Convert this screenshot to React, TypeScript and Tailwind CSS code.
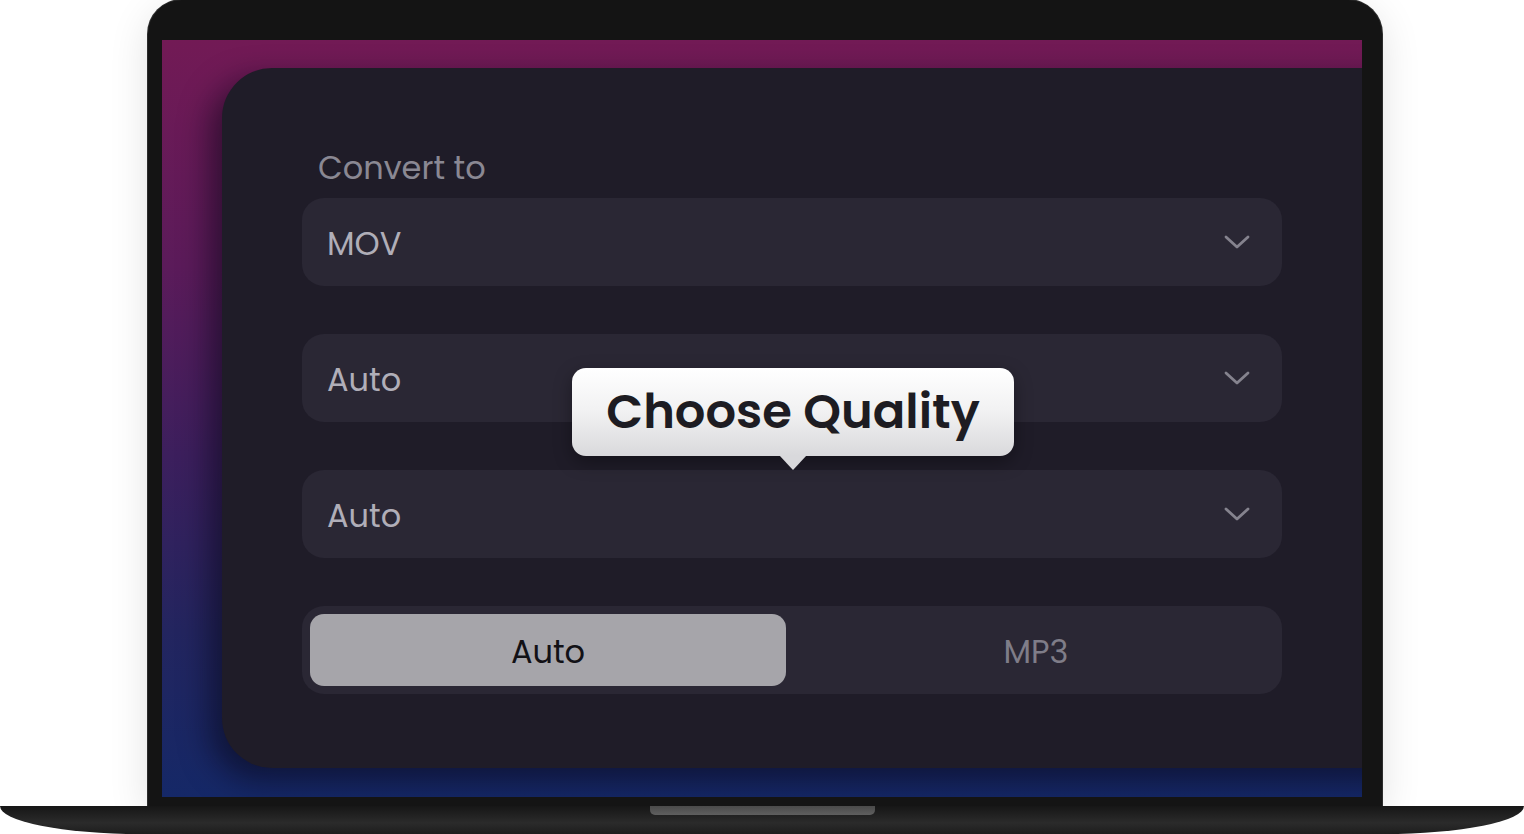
import React from "react";

const font = "font-['Poppins','Open_Sans','Liberation_Sans',sans-serif]";

const Chevron = () => (
  <svg width="26" height="14" viewBox="0 0 26 14" fill="none" className="shrink-0">
    <path
      d="M2 2 L13 12 L24 2"
      stroke="#85838e"
      strokeWidth="2.8"
      strokeLinecap="round"
      strokeLinejoin="round"
    />
  </svg>
);

const Select = ({ value, children }: { value: string; children?: React.ReactNode }) => (
  <div className="relative flex h-[88px] w-full items-center justify-between rounded-[22px] bg-[#2a2734] pl-[25px] pr-[32px]">
    <span className="pt-[4px] text-[32px] leading-none text-[#b0aeb8]">{value}</span>
    <Chevron />
    {children}
  </div>
);

const Tooltip = ({ label }: { label: string }) => (
  <div className="absolute left-[270px] top-[34px] z-10">
    <div className="relative flex h-[88px] w-[442px] items-center justify-center rounded-[14px] bg-[linear-gradient(180deg,#ffffff_0%,#f1f1f2_50%,#d9d9dc_100%)] shadow-[0_6px_18px_rgba(0,0,0,0.35)]">
      <span className="text-[48px] font-semibold leading-none text-[#1d1c22]">
        {label}
      </span>
      <span className="absolute -bottom-[14px] left-1/2 h-0 w-0 -translate-x-1/2 border-x-[14px] border-t-[15px] border-x-transparent border-t-[#d9d9dc]" />
    </div>
  </div>
);

export default function App() {
  return (
    <div className={`flex h-[834px] w-[1524px] flex-col overflow-hidden bg-white ${font}`}>
      {/* lid */}
      <div className="ml-[148px] flex h-[806px] w-[1234px] shrink-0 flex-col rounded-t-[34px] bg-[#141414] pb-[9px] pl-[14px] pr-[20px] pt-[40px] shadow-[0_0_0_1px_#2c2c2c,0_10px_40px_rgba(0,0,0,0.12)]">
        {/* screen */}
        <div className="flex h-[757px] flex-col overflow-hidden bg-[linear-gradient(180deg,#721a55_0%,#5b1b5a_30%,#3c1f5d_55%,#23255f_78%,#152867_100%)] pl-[60px] pt-[28px]">
          <div className="flex h-[700px] w-[1240px] shrink-0 flex-col rounded-l-[50px] bg-[#1f1c28] pl-[80px] pt-[81px] shadow-[-12px_12px_30px_rgba(8,6,20,0.55)]">
            <div className="flex w-[980px] flex-col">
              <div className="mb-[12px] pl-[16px] text-[32px] leading-[37px] text-[#8a8893]">
                Convert to
              </div>
              <Select value="MOV" />
              <div className="mt-[48px]">
                <Select value="Auto">
                  <Tooltip label="Choose Quality" />
                </Select>
              </div>
              <div className="mt-[48px]">
                <Select value="Auto" />
              </div>
              <div className="mt-[48px] grid h-[88px] grid-cols-2 gap-[12px] rounded-[22px] bg-[#2a2734] p-[8px]">
                <button className="flex items-center justify-center rounded-[14px] bg-[#a6a5aa] pt-[3px] text-[32px] leading-none text-[#121116]">
                  Auto
                </button>
                <button className="flex items-center justify-center pt-[3px] text-[32px] leading-none text-[#7f7d88]">
                  MP3
                </button>
              </div>
            </div>
          </div>
        </div>
      </div>
      {/* base */}
      <div className="relative flex h-[28px] w-full shrink-0 justify-center rounded-bl-[140px_28px] rounded-br-[140px_28px] bg-[linear-gradient(180deg,#161616_0%,#222222_35%,#2b2b2b_60%,#1d1d1d_100%)]">
        <div className="h-[9px] w-[225px] rounded-b-[5px] bg-[linear-gradient(180deg,#4a4a4a,#5f5f5f)]" />
      </div>
    </div>
  );
}
